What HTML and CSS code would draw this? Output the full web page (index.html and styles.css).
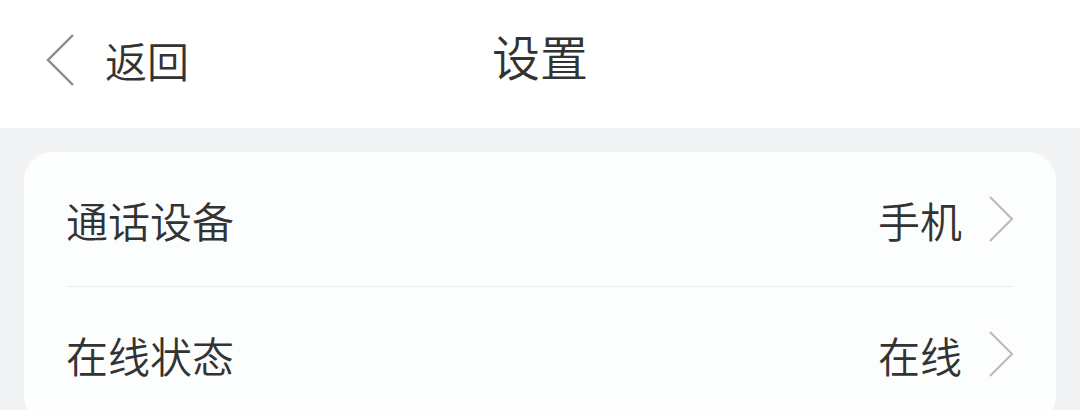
FILE: index.html
```html
<!DOCTYPE html>
<html lang="zh-CN">
<head>
    <meta charset="UTF-8">
    <meta name="viewport" content="width=device-width, initial-scale=1.0">
    <title>设置</title>
    <link rel="stylesheet" href="styles.css">
</head>
<body>
    <!-- 顶部导航 -->
    <div class="navbar">
        <a class="back" href="#">
            <svg class="back-icon" viewBox="0 0 30 54" width="30" height="54">
                <polyline points="28,2 3,27 28,52" fill="none" stroke="#8a8a8a" stroke-width="2.4"/>
            </svg>
            <span>返回</span>
        </a>
        <h1 class="title">设置</h1>
    </div>

    <div class="page">
        <div class="card">
            <div class="row">
                <span class="label">通话设备</span>
                <span class="value">手机</span>
                <svg class="arrow" viewBox="0 0 26 46" width="26" height="46">
                    <polyline points="2,1 24,23 2,45" fill="none" stroke="#bcbcbc" stroke-width="2.2"/>
                </svg>
            </div>
            <div class="row">
                <span class="label">在线状态</span>
                <span class="value">在线</span>
                <svg class="arrow" viewBox="0 0 26 46" width="26" height="46">
                    <polyline points="2,1 24,23 2,45" fill="none" stroke="#bcbcbc" stroke-width="2.2"/>
                </svg>
            </div>
        </div>
    </div>
</body>
</html>
```

FILE: styles.css
```css
body {
    margin: 0;
    background-color: #f2f3f5;
    color: #333;
    font-family: "Noto Sans CJK SC", "Noto Sans", sans-serif;
    font-weight: 350;
}
.navbar {
    position: relative;
    height: 128px;
    background: #fff;
    display: flex;
    align-items: center;
    justify-content: center;
}
.back {
    position: absolute;
    left: 45px;
    top: 29px;
    display: flex;
    align-items: center;
    color: #333;
    text-decoration: none;
    font-size: 42px;
}
.back-icon {
    margin-right: 30px;
}
.title {
    margin: 0;
    margin-top: -18px;
    font-size: 48px;
    font-weight: 350;
}
.page {
    padding: 24px 24px 0;
}
.card {
    background: #fcfdfd;
    border-radius: 28px;
    padding: 0 42px;
    height: 272px;
}
.row {
    display: flex;
    align-items: center;
    height: 134px;
    font-size: 42px;
}
.row + .row {
    border-top: 1px solid #ebecee;
}
.label {
    flex: 1;
}
.value {
    margin-right: 26px;
}
.arrow {
    display: block;
}
```
